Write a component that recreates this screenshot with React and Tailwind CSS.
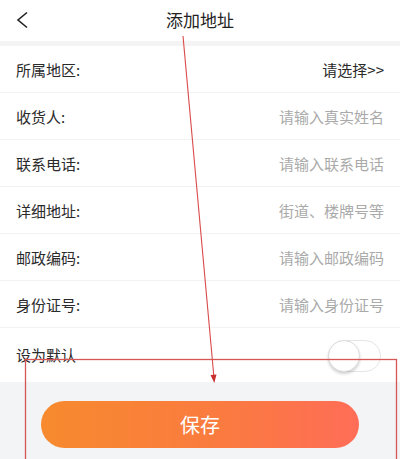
import React from "react";

const rows = [
  { label: "所属地区:", value: "请选择>>", dark: true },
  { label: "收货人:", value: "请输入真实姓名" },
  { label: "联系电话:", value: "请输入联系电话" },
  { label: "详细地址:", value: "街道、楼牌号等" },
  { label: "邮政编码:", value: "请输入邮政编码" },
  { label: "身份证号:", value: "请输入身份证号" },
];

export default function App() {
  return (
    <div
      className="relative w-[400px] h-[459px] overflow-hidden bg-white"
      style={{ fontFamily: '"Noto Sans CJK SC", "Noto Sans", sans-serif' }}
    >
      <div className="relative h-[41px] flex items-center justify-center">
        <svg className="absolute left-[15px] top-[11px]" width="14" height="18" viewBox="0 0 14 18">
          <path d="M12 1.5 L3 9 L12 16.5" fill="none" stroke="#222" strokeWidth="1.6" />
        </svg>
        <span className="text-[17px] text-[#222] leading-none mb-[2px]">添加地址</span>
      </div>
      <div className="h-[5px] bg-[#f4f4f4]" />
      {rows.map((r, i) => (
        <div
          key={i}
          className="h-[47px] flex items-center justify-between px-[16px] pt-[2px] border-b border-[#f2f2f2]"
        >
          <span className="text-[15px] text-[#2a2a2a]">{r.label}</span>
          <span className={`text-[15px] ${r.dark ? "text-[#2a2a2a]" : "text-[#aaaaaa]"}`}>{r.value}</span>
        </div>
      ))}
      <div className="h-[54px] flex items-center justify-between pl-[16px] pr-[19px]">
        <span className="text-[15px] text-[#2a2a2a]">设为默认</span>
        <div className="relative w-[53px] h-[32px] rounded-full border border-[#e5e5e5] bg-white mt-[2px]">
          <div className="absolute left-[-1px] top-[-1px] w-[32px] h-[32px] rounded-full bg-white border border-[#ddd] shadow-[0_2px_3px_rgba(0,0,0,0.18)]" />
        </div>
      </div>
      <div className="bg-[#f3f4f6] h-[80px] flex justify-center pt-[19px]">
        <button className="w-[318px] h-[47px] rounded-full bg-[linear-gradient(90deg,#f78a2e,#fa7b3f_55%,#ff6d57)] text-white text-[20px] leading-none flex items-center justify-center">
          保存
        </button>
      </div>
      <svg className="absolute left-0 top-0 pointer-events-none" width="400" height="459" viewBox="0 0 400 459">
        <line x1="183" y1="36" x2="214" y2="378" stroke="#d94a4a" strokeWidth="1.1" />
        <path d="M210.5 375 L214.3 383 L216.5 374.5 Z" fill="#c83030" />
        <rect x="25.5" y="359.5" width="371" height="120" fill="none" stroke="#d65555" strokeWidth="1.3" />
      </svg>
    </div>
  );
}
